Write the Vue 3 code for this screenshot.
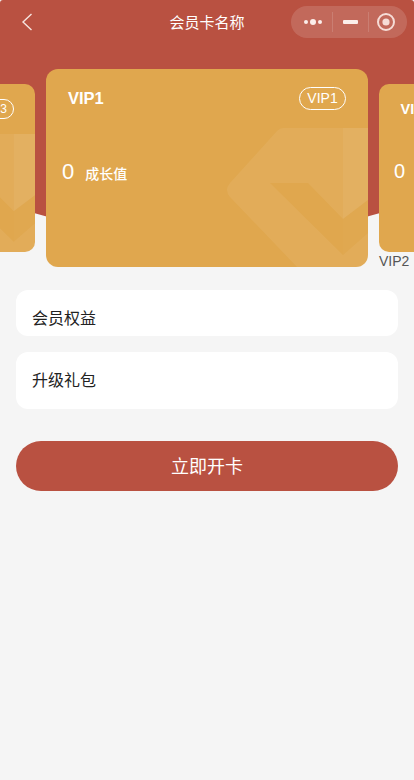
<script setup>
const slides = [
  { name: 'VIP3', kind: 'side left', label: '' },
  { name: 'VIP1', kind: 'main', label: '' },
  { name: 'VIP2', kind: 'side right', label: 'VIP2' },
]
</script>

<template>
  <div class="page">
    <div class="hero-bg"></div>
    <header class="nav">
      <svg class="back" viewBox="0 0 12 18" width="12" height="18">
        <path d="M10.5 1 L2 9 L10.5 17" fill="none" stroke="#f6e4df" stroke-width="1.4" />
      </svg>
      <span class="title">会员卡名称</span>
      <div class="capsule">
        <svg class="cap-more" viewBox="0 0 20 8" width="20" height="8">
          <circle cx="3" cy="4" r="2" fill="#fbeeea" />
          <circle cx="10" cy="4" r="3" fill="#fbeeea" />
          <circle cx="17" cy="4" r="2" fill="#fbeeea" />
        </svg>
        <i class="sep"></i>
        <i class="cap-min"></i>
        <i class="sep"></i>
        <svg class="cap-rec" viewBox="0 0 20 20" width="20" height="20">
          <circle cx="10" cy="10" r="8" fill="none" stroke="#f6dcd6" stroke-width="2" />
          <circle cx="10" cy="10" r="3.6" fill="#f6dcd6" />
        </svg>
      </div>
    </header>

    <section class="carousel">
      <div v-for="s in slides" :key="s.name" class="slide" :class="s.kind">
        <div class="card">
          <svg class="mark" viewBox="0 0 322 198" preserveAspectRatio="none">
            <path d="M237 59 L322 59 L322 131 L297 150 L262 114 L224 114 L297 186 L322 164 L322 198 L251 198 L184 128 Q178 121 184 114 L231 62 Q234 59 237 59 Z" fill="#fff" fill-opacity="0.065" />
            <path d="M297 59 L322 59 L322 131 L297 150 Z" fill="#fff" fill-opacity="0.05" />
            <path d="M297 150 L322 131 L322 164 L297 186 Z" fill="#fff" fill-opacity="0.015" />
          </svg>
          <div class="top">
            <strong class="name">{{ s.name }}</strong>
            <span class="tag">{{ s.name }}</span>
          </div>
          <div class="growth">
            <span class="num">0</span>
            <span class="unit">成长值</span>
          </div>
        </div>
        <div v-if="s.label" class="label">{{ s.label }}</div>
      </div>
    </section>

    <main class="body">
      <div class="row first">会员权益</div>
      <div class="row second">升级礼包</div>
      <button class="open" type="button">立即开卡</button>
    </main>
  </div>
</template>

<style>
html, body { margin: 0; background: #f5f5f5; }
</style>

<style scoped>
.page {
  position: relative;
  min-height: 780px;
  width: 414px;
  overflow: hidden;
  border-radius: 3px 3px 0 0;
  background: #f5f5f5;
  font-family: "Liberation Sans", "Noto Sans CJK SC", sans-serif;
}
.hero-bg {
  position: absolute;
  left: -433px;
  top: -1043px;
  width: 1280px;
  height: 1280px;
  border-radius: 50%;
  background: #b95141;
}
.nav {
  position: relative;
  height: 44px;
  box-sizing: border-box;
  padding-bottom: 2px;
  display: flex;
  align-items: center;
  justify-content: center;
}
.back { position: absolute; left: 21px; top: 13px; }
.title { color: #fff; font-size: 15px; }
.capsule {
  position: absolute;
  left: 291px;
  top: 6px;
  width: 116px;
  height: 32px;
  box-sizing: border-box;
  border-radius: 16px;
  background: rgba(255, 255, 255, 0.14);
  display: flex;
  align-items: center;
  padding-left: 12px;
}
.sep { width: 1px; height: 20px; background: rgba(255, 255, 255, 0.14); }
.cap-more { margin-right: 9px; }
.cap-min { width: 15px; height: 3.5px; border-radius: 1px; background: #fbeeea; margin: 0 10px; }
.cap-rec { margin-left: 7px; }

.carousel {
  position: relative;
  margin-top: 25px;
  display: flex;
  justify-content: center;
  align-items: flex-start;
  gap: 11px;
  height: 198px;
}
.slide { flex: none; position: relative; }
.slide.main { width: 322px; }
.slide.side { width: 274px; margin-top: 15px; }
.card {
  position: relative;
  overflow: hidden;
  background: #e0a74e;
  color: #fff;
}
.main .card { height: 198px; border-radius: 12px; }
.side .card { height: 168px; border-radius: 10px; }
.mark { position: absolute; inset: 0; width: 100%; height: 100%; }
.top { position: relative; display: flex; justify-content: space-between; align-items: center; }
.main .top { padding: 18px 22px 0; }
.side .top { padding: 15px 21px 0 21.5px; }
.name { font-weight: 700; }
.main .name { font-size: 16.5px; }
.side .name { font-size: 14.5px; }
.tag {
  border: 1px solid #fff;
  box-sizing: border-box;
  text-align: center;
  border-radius: 12px;
}
.main .tag { width: 47px; height: 23px; line-height: 21px; font-size: 14px; }
.side .tag { width: 40px; height: 20px; line-height: 18px; font-size: 12px; }
.growth { position: relative; display: flex; align-items: baseline; }
.main .growth { padding: 49px 0 0 16px; }
.side .growth { padding: 41px 0 0 15px; }
.num { font-size: 22px; }
.main .num { margin-right: 11px; }
.side .num { font-size: 20px; margin-right: 12px; }
.unit { font-weight: 500; }
.main .unit { font-size: 14px; }
.side .unit { font-size: 12px; }
.label {
  margin-top: 1px;
  color: #555;
  font-size: 14px;
  line-height: 16px;
}
.body {
  position: relative;
  padding: 23px 16px 0;
  display: flex;
  flex-direction: column;
}
.row {
  background: #fff;
  border-radius: 12px;
  padding-left: 16px;
  color: #222;
  font-size: 16px;
  box-sizing: border-box;
}
.row.first { height: 46px; line-height: 58px; margin-bottom: 16px; overflow: hidden; }
.row.second { height: 57px; line-height: 57px; }
.open {
  margin-top: 32px;
  height: 50px;
  border: 0;
  border-radius: 25px;
  background: #b95141;
  color: #fff;
  font-family: inherit;
  font-size: 18px;
  padding: 0 0 2px;
}
</style>
